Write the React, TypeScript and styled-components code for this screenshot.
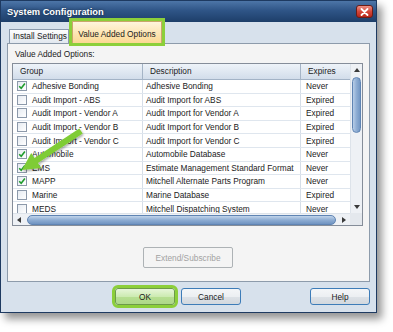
import styled, { createGlobalStyle } from 'styled-components'

const GlobalStyle = createGlobalStyle`
  html, body { margin: 0; padding: 0; background: #ffffff; }
  body {
    font-family: "Liberation Sans", Arial, sans-serif;
    font-size: 8.3px;
    color: #1b1b1b;
  }
`

type Addon = {
  on: boolean
  group: string
  desc: string
  expires: string
}

const addons: Addon[] = [
  { on: true, group: 'Adhesive Bonding', desc: 'Adhesive Bonding', expires: 'Never' },
  { on: false, group: 'Audit Import - ABS', desc: 'Audit Import for ABS', expires: 'Expired' },
  { on: false, group: 'Audit Import - Vendor A', desc: 'Audit Import for Vendor A', expires: 'Expired' },
  { on: false, group: 'Audit Import - Vendor B', desc: 'Audit Import for Vendor B', expires: 'Expired' },
  { on: false, group: 'Audit Import - Vendor C', desc: 'Audit Import for Vendor C', expires: 'Expired' },
  { on: true, group: 'Automobile', desc: 'Automobile Database', expires: 'Never' },
  { on: true, group: 'EMS', desc: 'Estimate Management Standard Format', expires: 'Never' },
  { on: true, group: 'MAPP', desc: 'Mitchell Alternate Parts Program', expires: 'Never' },
  { on: false, group: 'Marine', desc: 'Marine Database', expires: 'Expired' },
  { on: false, group: 'MEDS', desc: 'Mitchell Dispatching System', expires: 'Never' },
]

function Arrow({ dir }: { dir: 'up' | 'down' | 'left' | 'right' }) {
  const pts = {
    up: '1,5 4,1 7,5',
    down: '1,1 4,5 7,1',
    left: '5,1 1,4 5,7',
    right: '1,1 5,4 1,7',
  }[dir]
  const vertical = dir === 'up' || dir === 'down'
  return (
    <svg width={vertical ? 8 : 6} height={vertical ? 6 : 8} viewBox={vertical ? '0 0 8 6' : '0 0 6 8'}>
      <polygon points={pts} fill="#3a3a3a" />
    </svg>
  )
}

export default function App() {
  return (
    <Page>
      <GlobalStyle />
      <Window>
        <TitleBar>
          <Title>System Configuration</Title>
          <CloseButton>
            <svg width="9" height="8" viewBox="0 0 9 8">
              <path d="M1.5 1 L7.5 7 M7.5 1 L1.5 7" stroke="#ffffff" strokeWidth="1.8" strokeLinecap="round" />
            </svg>
          </CloseButton>
        </TitleBar>
        <Content>
          <TabStrip>
            <Tab>Install Settings</Tab>
            <ActiveTab>Value Added Options</ActiveTab>
          </TabStrip>
          <Panel>
            <PanelLabel>Value Added Options:</PanelLabel>
            <GridFrame>
              <GridBody>
                <HeaderRow>
                  <HeaderCell>Group</HeaderCell>
                  <HeaderCell>Description</HeaderCell>
                  <HeaderCell $last>Expires</HeaderCell>
                </HeaderRow>
                {addons.map((a) => (
                  <Row key={a.group}>
                    <Cell>
                      <CheckBox>
                        {a.on && (
                          <svg width="8" height="8" viewBox="0 0 8 8">
                            <path d="M1.2 4.2 L3.2 6.2 L6.9 1.6" stroke="#1f9c2c" strokeWidth="1.6" fill="none" />
                          </svg>
                        )}
                      </CheckBox>
                      {a.group}
                    </Cell>
                    <Cell>{a.desc}</Cell>
                    <Cell $last>{a.expires}</Cell>
                  </Row>
                ))}
              </GridBody>
              <VScroll>
                <ScrollButton><Arrow dir="up" /></ScrollButton>
                <VThumb />
                <VTrack />
                <ScrollButton><Arrow dir="down" /></ScrollButton>
              </VScroll>
              <HScroll>
                <ScrollButton><Arrow dir="left" /></ScrollButton>
                <HThumb />
                <ScrollButton><Arrow dir="right" /></ScrollButton>
              </HScroll>
              <Corner />
            </GridFrame>
            <ExtendButton disabled>Extend/Subscribe</ExtendButton>
          </Panel>
          <Footer>
            <OkButton>OK</OkButton>
            <DialogButton>Cancel</DialogButton>
            <DialogButton $push>Help</DialogButton>
          </Footer>
        </Content>

        {/* green callout arrow drawn over the list */}
        <Callout width="100" height="180" viewBox="0 0 100 180">
          <defs>
            <filter id="sh" x="-20%" y="-20%" width="140%" height="140%">
              <feDropShadow dx="1" dy="1.5" stdDeviation="1.2" floodColor="#000" floodOpacity="0.35" />
            </filter>
          </defs>
          <polygon
            points="79.3,128.5 34.5,158.1 31.2,153.1 22,170 41.2,168.1 37.9,163.1 82.7,133.5"
            fill="#7fcc34"
            filter="url(#sh)"
          />
        </Callout>
      </Window>
    </Page>
  )
}

const Page = styled.div`
  width: 393px;
  height: 332px;
  overflow: hidden;
`

const Window = styled.div`
  position: relative;
  width: 377px;
  height: 313px;
  box-sizing: border-box;
  display: flex;
  flex-direction: column;
  background: #d7e1ec;
  border: 1px solid #1e3a61;
  box-shadow: 5px 6px 8px rgba(0, 0, 0, 0.42);
`

const TitleBar = styled.div`
  height: 21px;
  display: flex;
  align-items: center;
  padding: 0 3px 0 6px;
  background: linear-gradient(#4d76a8 0%, #2f5587 45%, #1d3e69 100%);
`

const Title = styled.span`
  color: #ffffff;
  font-weight: bold;
  font-size: 9.3px;
  text-shadow: 0 0 3px rgba(0, 0, 0, 0.5);
`

const CloseButton = styled.div`
  margin-left: auto;
  width: 17px;
  height: 13px;
  box-sizing: border-box;
  display: flex;
  align-items: center;
  justify-content: center;
  border: 1px solid #6d1c15;
  border-radius: 3px;
  background: linear-gradient(#ee9186 0%, #d2473a 50%, #b8261b 100%);
`

const Content = styled.div`
  flex: 1;
  display: flex;
  flex-direction: column;
  padding: 0 6px 0 6px;
`

const TabStrip = styled.div`
  height: 21px;
  display: flex;
  align-items: flex-end;
  gap: 3px;
  padding-left: 2px;
`

const Tab = styled.div`
  width: 60px;
  height: 14px;
  box-sizing: border-box;
  padding-left: 3px;
  line-height: 13px;
  border: 1px solid #8a9aad;
  border-bottom: none;
  background: linear-gradient(#fdfdfd, #e2e8ef);
  white-space: nowrap;
`

const ActiveTab = styled.div`
  position: relative;
  z-index: 2;
  width: 90px;
  height: 22px;
  box-sizing: border-box;
  display: flex;
  align-items: flex-end;
  justify-content: center;
  padding-bottom: 4px;
  border: 1px solid #c9a76b;
  border-bottom: none;
  background: linear-gradient(#fff5dc, #fbd893);
  outline: 3px solid #8ccf3a;
  white-space: nowrap;
`

const Panel = styled.div`
  height: 239px;
  box-sizing: border-box;
  display: flex;
  flex-direction: column;
  padding: 0 5px 0 4px;
  border: 1px solid #8d9bab;
  background: #f4f4f4;
`

const PanelLabel = styled.div`
  height: 17px;
  padding: 2px 0 0 3px;
  line-height: 17px;
`

const GridFrame = styled.div`
  width: 351px;
  height: 163px;
  box-sizing: border-box;
  display: grid;
  grid-template-columns: 1fr 12px;
  grid-template-rows: 1fr 12px;
  border: 1px solid #858d99;
  background: #ffffff;
`

const GridBody = styled.div`
  overflow: hidden;
`

const HeaderRow = styled.div`
  height: 15px;
  display: grid;
  grid-template-columns: 130px 158px 1fr;
  border-bottom: 1px solid #a3b3c6;
  background: linear-gradient(#eef3f9, #d2ddea);
`

const HeaderCell = styled.div<{ $last?: boolean }>`
  padding-left: ${(p) => (p.$last ? 7 : 7)}px;
  line-height: 15px;
  border-right: ${(p) => (p.$last ? 'none' : '1px solid #a5b4c6')};
`

const Row = styled.div`
  height: 13.6px;
  box-sizing: border-box;
  display: grid;
  grid-template-columns: 130px 158px 1fr;
  border-bottom: 1px solid #dfe6ee;
`

const Cell = styled.div<{ $last?: boolean }>`
  display: flex;
  align-items: center;
  gap: 5px;
  padding-left: ${(p) => (p.$last ? 5 : 3)}px;
  white-space: nowrap;
  overflow: hidden;
  border-right: ${(p) => (p.$last ? 'none' : '1px solid #d6dee8')};
`

const CheckBox = styled.span`
  width: 10px;
  height: 10px;
  box-sizing: border-box;
  display: inline-flex;
  align-items: center;
  justify-content: center;
  margin-left: 1px;
  border: 1px solid #8c99aa;
  background: linear-gradient(135deg, #e6ebf1, #ffffff);
`

const VScroll = styled.div`
  display: flex;
  flex-direction: column;
  background: #eef1f5;
  border-left: 1px solid #dde3ea;
`

const HScroll = styled.div`
  display: flex;
  align-items: center;
  background: #eef1f5;
  border-top: 1px solid #dde3ea;
`

const ScrollButton = styled.div`
  flex: 0 0 12px;
  height: 12px;
  display: flex;
  align-items: center;
  justify-content: center;
`

const VTrack = styled.div`
  flex: 1;
`

const VThumb = styled.div`
  height: 54px;
  margin: 1px 1px 0 1px;
  border: 1px solid #5f84b3;
  border-radius: 5px;
  background: linear-gradient(90deg, #b7cde7, #8eadd3 50%, #7397c4);
`

const HThumb = styled.div`
  flex: 1;
  height: 10px;
  box-sizing: border-box;
  margin: 0 2px;
  border: 1px solid #5f84b3;
  border-radius: 5px;
  background: linear-gradient(#c1d4ea, #8eadd3 50%, #6f93c1);
`

const Corner = styled.div`
  background: #e4e8ed;
`

const ExtendButton = styled.button`
  align-self: center;
  margin-top: 21px;
  width: 90px;
  height: 21px;
  padding: 0;
  border: 1px solid #adb2b5;
  border-radius: 2px;
  background: #f4f4f4;
  color: #a2a2a2;
  font-family: inherit;
  font-size: 8.3px;
`

const Footer = styled.div`
  display: flex;
  align-items: center;
  gap: 6px;
  padding: 6px 0 0 108px;
`

const DialogButton = styled.button<{ $push?: boolean }>`
  width: 60px;
  height: 17px;
  padding: 0;
  margin-left: ${(p) => (p.$push ? 'auto' : '0')};
  border: 1px solid #3d7cb8;
  border-radius: 3px;
  background: linear-gradient(#f4f6f8, #eceff2 50%, #dde2e7 51%, #d2d8de);
  color: #1b1b1b;
  font-family: inherit;
  font-size: 8.3px;
`

const OkButton = styled(DialogButton)`
  position: relative;
  z-index: 2;
  border-color: #6c9a4a;
  background: linear-gradient(#e6f5d8, #cdebb2 50%, #b7df92 51%, #aed889);
  outline: 3px solid #8ccf3a;
`

const Callout = styled.svg`
  position: absolute;
  left: -1px;
  top: -1px;
  pointer-events: none;
  z-index: 5;
`
